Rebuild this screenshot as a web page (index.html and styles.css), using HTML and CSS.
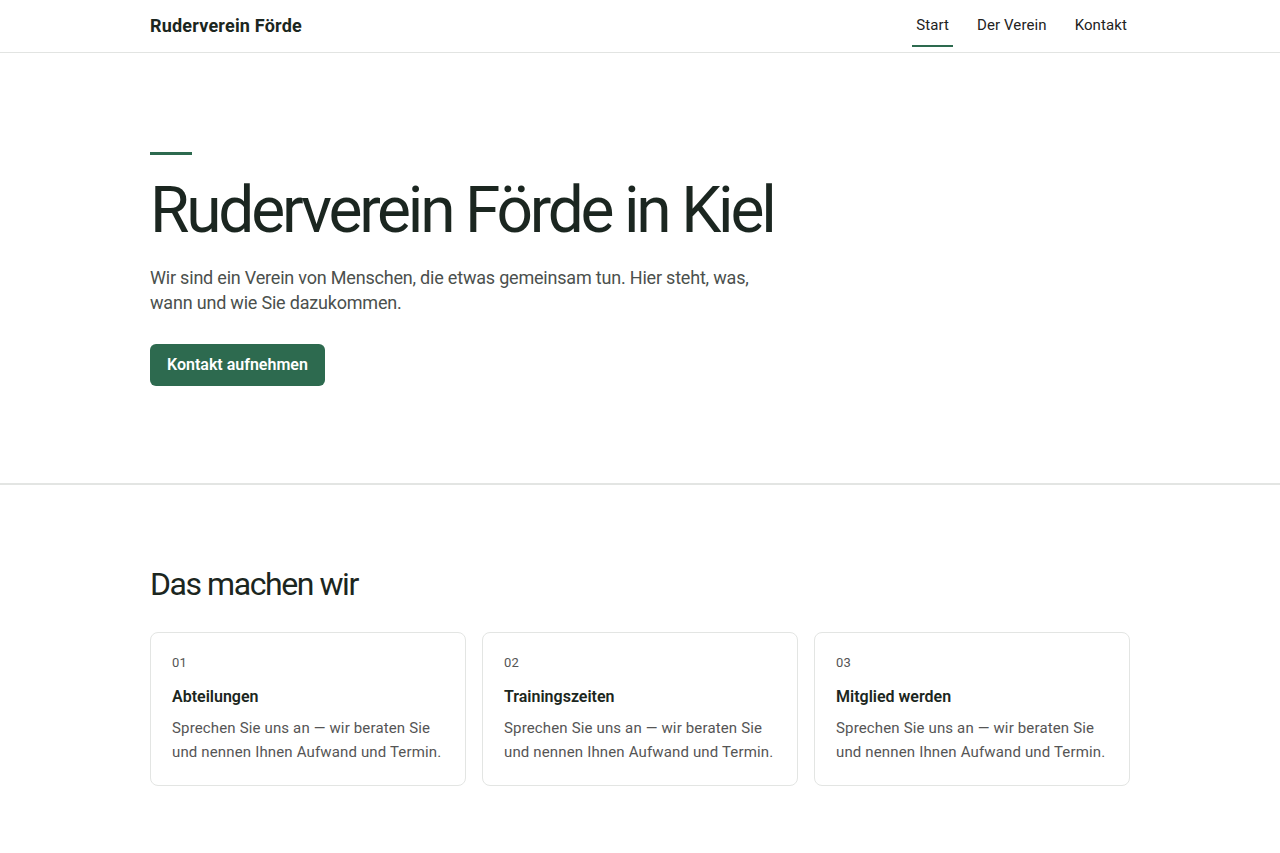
FILE: index.html
```html
<!DOCTYPE html>
<html lang="de">
<head>
    <meta charset="UTF-8">
    <meta name="viewport" content="width=device-width, initial-scale=1.0">
    <title>Ruderverein Förde</title>
    <link rel="stylesheet" href="styles.css">
</head>
<body>
    <header class="site-header">
        <div class="wrap header-inner">
            <a class="brand" href="#">Ruderverein Förde</a>
            <nav class="nav">
                <a href="#" class="active">Start</a>
                <a href="#">Der Verein</a>
                <a href="#">Kontakt</a>
            </nav>
        </div>
    </header>

    <section class="hero">
        <div class="wrap">
            <div class="hero-bar"></div>
            <h1>Ruderverein Förde in Kiel</h1>
            <p class="lead">Wir sind ein Verein von Menschen, die etwas gemeinsam tun. Hier steht, was, wann und wie Sie dazukommen.</p>
            <a class="btn" href="#">Kontakt aufnehmen</a>
        </div>
    </section>

    <section class="features">
        <div class="wrap">
            <h2>Das machen wir</h2>
            <div class="cards">
                <div class="card">
                    <div class="num">01</div>
                    <h3>Abteilungen</h3>
                    <p>Sprechen Sie uns an — wir beraten Sie und nennen Ihnen Aufwand und Termin.</p>
                </div>
                <div class="card">
                    <div class="num">02</div>
                    <h3>Trainingszeiten</h3>
                    <p>Sprechen Sie uns an — wir beraten Sie und nennen Ihnen Aufwand und Termin.</p>
                </div>
                <div class="card">
                    <div class="num">03</div>
                    <h3>Mitglied werden</h3>
                    <p>Sprechen Sie uns an — wir beraten Sie und nennen Ihnen Aufwand und Termin.</p>
                </div>
            </div>
        </div>
    </section>
</body>
</html>
```

FILE: styles.css
```css
*{
    box-sizing: border-box;
}
body{
    margin: 0;
    font-family: Roboto, Inter, "Noto Sans", sans-serif;
    color: #1b2620;
    background: #fff;
}
a{
    text-decoration: none;
    color: inherit;
}
.wrap{
    width: 980px;
    margin: 0 auto;
}

/* header */
.site-header{
    border-bottom: 1px solid #e2e4e2;
    height: 53px;
}
.header-inner{
    display: flex;
    justify-content: space-between;
    align-items: flex-start;
}
.brand{
    font-size: 18px;
    font-weight: 700;
    line-height: 24px;
    padding-top: 14px;
    letter-spacing: 0.2px;
}
.nav{
    display: flex;
    gap: 20px;
    margin-right: -1px;
}
.nav a{
    display: block;
    font-size: 15px;
    line-height: 20px;
    padding: 15px 4px 10px;
    border-bottom: 2px solid transparent;
    color: #222;
    letter-spacing: 0.1px;
}
.nav a.active{
    border-bottom-color: #2d6a4f;
}

/* hero */
.hero{
    padding: 99px 0 97px;
    border-bottom: 2px solid #e3e5e3;
}
.hero-bar{
    width: 42px;
    height: 3px;
    background: #2d6a4f;
    margin-bottom: 21px;
}
.hero h1{
    margin: 0;
    font-size: 64px;
    font-weight: 400;
    line-height: 1.1;
    letter-spacing: -0.05em;
}
.lead{
    margin: 19px 0 29px;
    max-width: 620px;
    font-size: 18px;
    line-height: 25px;
    color: #4b504d;
    letter-spacing: -0.2px;
}
.btn{
    display: inline-block;
    background: #2d6a4f;
    color: #fff;
    font-size: 16px;
    font-weight: 600;
    line-height: 22px;
    padding: 10px 17px;
    border-radius: 6px;
}

/* features */
.features{
    padding: 80px 0 68px;
}
.features h2{
    margin: 0 0 28px;
    font-size: 32px;
    font-weight: 400;
    line-height: 1.2;
    letter-spacing: -0.045em;
}
.cards{
    display: grid;
    grid-template-columns: repeat(3, 1fr);
    gap: 16px;
}
.card{
    border: 1px solid #e3e5e3;
    border-radius: 8px;
    padding: 20px 21px 21px;
}
.num{
    font-size: 13px;
    line-height: 20px;
    color: #555;
    letter-spacing: 0.3px;
}
.card h3{
    margin: 13px 0 8px;
    font-size: 16px;
    font-weight: 600;
    line-height: 22px;
}
.card p{
    margin: 0;
    font-size: 15px;
    line-height: 24px;
    color: #555;
    letter-spacing: 0.15px;
}
```
